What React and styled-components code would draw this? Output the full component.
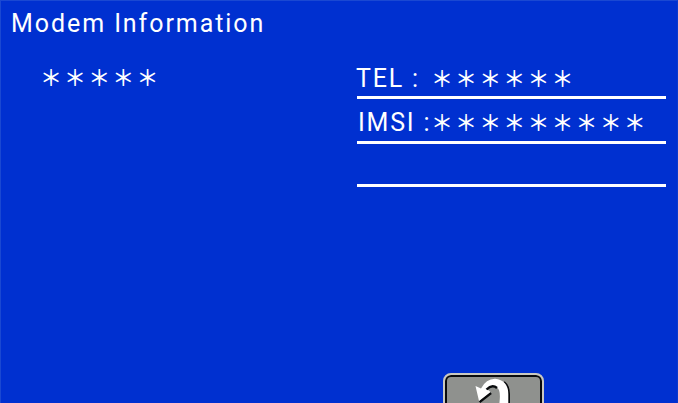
import React from "react";
import styled, { createGlobalStyle } from "styled-components";

const GlobalStyle = createGlobalStyle`
  *, *::before, *::after { box-sizing: border-box; }
  body { margin: 0; overflow: hidden; background: #0030d0; }
`;

const Screen = styled.main`
  display: flex;
  flex-direction: column;
  width: 678px;
  height: 403px;
  overflow: hidden;
  background: #0030d0;
  border-top: 1px solid #1a48d2;
  border-left: 1px solid #1a48d2;
  border-right: 1px solid #0a39cb;
  color: #fff;
  font-family: Roboto, "Noto Sans CJK JP", sans-serif;
  font-size: 25px;
  white-space: pre;
`;

const Title = styled.h1`
  flex: none;
  margin: 0;
  padding: 8px 0 0 10px;
  height: 57px;
  font-size: 25px;
  font-weight: 400;
  line-height: 30px;
  letter-spacing: 1.93px;
`;

const Content = styled.section`
  flex: none;
  display: grid;
  grid-template-columns: 355px 309px;
  column-gap: 1px;
  height: 315px;
`;

const Masked = styled.span`
  font-family: "Noto Sans CJK JP", sans-serif;
  font-size: 22px;
  font-weight: 500;
  letter-spacing: 2.1px;
  line-height: 34px;
  height: 34px;
`;

const Model = styled.div`
  padding: 0 0 0 39px;
  display: flex;
`;

const Fields = styled.div`
  display: flex;
  flex-direction: column;
`;

const Field = styled.div`
  display: flex;
  height: ${(p) => p.$height}px;
  padding-top: ${(p) => p.$drop || 0}px;
  border-bottom: 3px solid #fff;
`;

const Label = styled.span`
  flex: none;
  width: 74px;
  text-indent: ${(p) => p.$inset}px;
  letter-spacing: 1.8px;
  line-height: 40px;
`;

const Footer = styled.footer`
  display: flex;
  padding-left: 442px;
`;

const BackButton = styled.button`
  flex: none;
  width: 101px;
  height: 60px;
  padding: 0;
  border: 2px solid #c9c8c0;
  border-radius: 8px;
  background: #8f918e;
  box-shadow: inset 0 0 0 2px #080a0c;
`;

const BackIcon = styled.svg`
  display: block;
`;

export default function App() {
  return (
    <>
      <GlobalStyle />
      <Screen>
        <Title>Modem Information</Title>
        <Content>
          <Model>
            <Masked>＊＊＊＊＊</Masked>
          </Model>
          <Fields>
            <Field $height={41} $drop={1}>
              <Label $inset={-1}>TEL :</Label>
              <Masked>＊＊＊＊＊＊</Masked>
            </Field>
            <Field $height={45} $drop={4}>
              <Label $inset={1}>IMSI :</Label>
              <Masked>＊＊＊＊＊＊＊＊＊</Masked>
            </Field>
            <Field $height={43} />
          </Fields>
        </Content>
        <Footer>
          <BackButton aria-label="Back">
            <BackIcon width="97" height="56" viewBox="446 375 97 56">
              <path d="M505 382Q510 386 510 394V406" fill="none" stroke="#080a0c" strokeWidth="2" />
              <path d="M480.5 402L492 393" stroke="#080a0c" strokeWidth="2.6" />
              <path d="M476.5 386L482 388.5Q487 379 496 378.8Q509 380 509.3 394V406H500Q502.5 390 498 387.5Q494 384 488 389L491.5 392L480 401Z" fill="#fff" />
              <path d="M487.5 389.5Q493 384 498 388" fill="none" stroke="#080a0c" strokeWidth="2.4" />
            </BackIcon>
          </BackButton>
        </Footer>
      </Screen>
    </>
  );
}
